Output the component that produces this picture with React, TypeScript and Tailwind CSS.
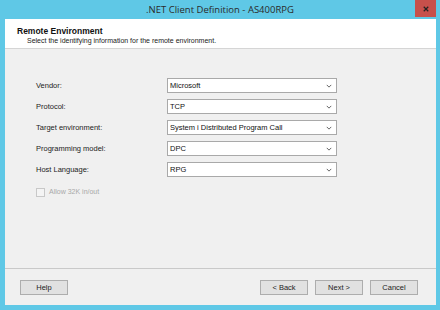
const fields = [
  { label: "Vendor:", value: "Microsoft" },
  { label: "Protocol:", value: "TCP" },
  { label: "Target environment:", value: "System i Distributed Program Call" },
  { label: "Programming model:", value: "DPC" },
  { label: "Host Language:", value: "RPG" },
];

const Chevron = () => (
  <svg viewBox="0 0 8 5" className="w-[6px] h-[4px] text-[#555]">
    <path d="M1 1 L4 4 L7 1" fill="none" stroke="currentColor" strokeWidth="1.2" />
  </svg>
);

function Button({ children }: { children: React.ReactNode }) {
  return (
    <div className="w-[48px] h-[15px] flex items-center justify-center border border-[#adadad] bg-[#e1e1e1] text-[7.5px] text-[#222]">
      {children}
    </div>
  );
}

export default function App() {
  return (
    <div
      className="w-[440px] h-[310px] bg-[#5fc8e6] flex flex-col overflow-hidden"
      style={{ fontFamily: "'Liberation Sans', Arial, sans-serif" }}
    >
      {/* Title bar */}
      <div className="h-[19px] flex items-center relative shrink-0">
        <div className="flex-1 text-center text-[9.5px] text-[#2b2b2b] pt-[1px]" style={{ fontFamily: "'Open Sans', 'Noto Sans', sans-serif" }}>
          .NET Client Definition - AS400RPG
        </div>
        <div className="absolute right-[4px] top-0 w-[21px] h-[17px] bg-[#c7504b] flex items-center justify-center">
          <svg viewBox="0 0 8 8" className="w-[6px] h-[6px]">
            <path d="M1 1 L7 7 M7 1 L1 7" stroke="#222" strokeWidth="1.6" />
          </svg>
        </div>
      </div>

      {/* Client area */}
      <div className="flex-1 mx-[5px] mr-[4px] mb-[5px] bg-[#f0f0f0] flex flex-col">
        {/* Header */}
        <div className="h-[30px] bg-white border-b border-[#d5d5d5] pl-[12px] pt-[7px] flex flex-col">
          <div className="text-[8.5px] font-bold text-[#111] leading-[10px]">Remote Environment</div>
          <div className="text-[7px] text-[#222] leading-[9px] pl-[10px]">
            Select the identifying information for the remote environment.
          </div>
        </div>

        {/* Body */}
        <div className="flex-1 flex flex-col pl-[31px] pt-[29px]">
          <div className="flex flex-col gap-[6px]">
            {fields.map((f) => (
              <div key={f.label} className="flex items-center h-[15px]">
                <div className="w-[131px] text-[7.5px] text-[#222]">{f.label}</div>
                <div className="w-[170px] h-[15px] bg-white border border-[#a9a9a9] flex items-center justify-between pl-[2px] pr-[4px]">
                  <span className="text-[7.5px] text-[#111]">{f.value}</span>
                  <Chevron />
                </div>
              </div>
            ))}
          </div>
          <div className="flex items-center gap-[4px] mt-[10px]">
            <div className="w-[9px] h-[9px] border border-[#c8c8c8] bg-[#f4f4f4]" />
            <span className="text-[7px] text-[#a8a8a8]">Allow 32K in/out</span>
          </div>
        </div>

        {/* Footer */}
        <div className="h-[37px] border-t border-[#c9c9c9] flex items-center px-[15px] pt-[1px]">
          <Button>Help</Button>
          <div className="flex-1" />
          <div className="flex gap-[7px]">
            <Button>&lt; Back</Button>
            <Button>Next &gt;</Button>
            <Button>Cancel</Button>
          </div>
          <div className="w-[3px]" />
        </div>
      </div>
    </div>
  );
}
